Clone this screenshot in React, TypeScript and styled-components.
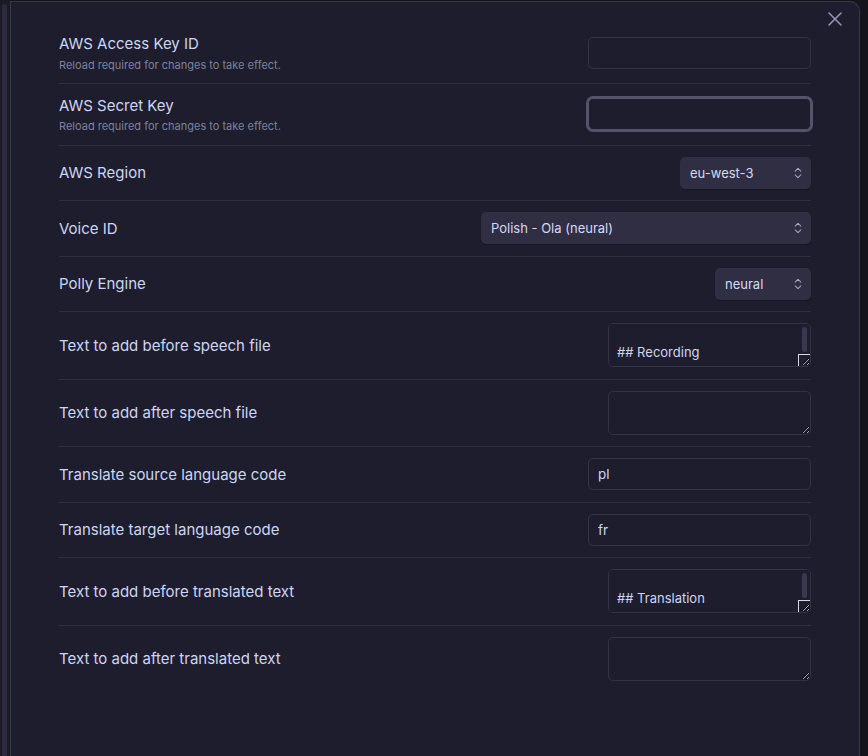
import React, { useEffect, useRef } from "react";
import styled, { createGlobalStyle } from "styled-components";
import { X, ChevronsUpDown } from "lucide-react";

const GlobalStyle = createGlobalStyle`
  html, body { margin: 0; padding: 0; background: #15141d; }
  body { font-family: Inter, "Noto Sans", sans-serif; }
  * { box-sizing: border-box; }
`;

const Page = styled.div`
  display: flex;
  height: 756px;
  padding: 1px 8px 0 0;
  overflow: hidden;
  background: #15141d;
`;

const Gutter = styled.div`
  width: 10px;
  flex: none;
  background: #1b1a26;
  padding: 4px 3px 0 2px;
  margin-top: -1px;
`;

const GutterThumb = styled.div`
  height: 100%;
  border-radius: 3px 3px 0 0;
  background: #2d2b3b;
`;

const Modal = styled.div`
  position: relative;
  flex: 1;
  background: #1e1d2d;
  border: 1px solid #393748;
  border-bottom: none;
  border-top-right-radius: 10px;
  padding: 21px 48px 0 48px;
`;

const CloseButton = styled.button`
  position: absolute;
  top: 5px;
  right: 12px;
  width: 24px;
  height: 24px;
  padding: 0;
  border: none;
  background: transparent;
  color: #8f95b8;
  display: flex;
  align-items: center;
  justify-content: center;
`;

const SettingList = styled.div`
  display: flex;
  flex-direction: column;
`;

const SettingItem = styled.div<{ $first?: boolean }>`
  display: flex;
  align-items: center;
  gap: 16px;
  padding: 11.25px 0;
  border-top: ${(p) => (p.$first ? "none" : "1px solid #302e42")};
`;

const Info = styled.div`
  flex: 1 1 auto;
  min-width: 0;
`;

const Name = styled.div`
  font-size: 15px;
  line-height: 1.3;
  color: #cdd6f4;
`;

const Description = styled.div`
  font-size: 11px;
  line-height: 1.3;
  padding-top: 4px;
  color: #7c819c;
`;

const Control = styled.div`
  flex: none;
  display: flex;
  justify-content: flex-end;
`;

const TextInput = styled.input`
  width: 223px;
  height: 32px;
  padding: 0 9px;
  background: #1e1d2d;
  border: 1px solid #343245;
  border-radius: 5px;
  color: #cdd6f4;
  caret-color: #e6e9fa;
  font-family: Inter, sans-serif;
  font-size: 13.5px;
  outline: none;
  &:focus {
    border-color: #555369;
    box-shadow: 0 0 0 2px #555369;
  }
`;

const SelectWrap = styled.div<{ $w: number }>`
  position: relative;
  width: ${(p) => p.$w}px;
`;

const Select = styled.select`
  appearance: none;
  -webkit-appearance: none;
  width: 100%;
  height: 32px;
  padding: 0 28px 0 10px;
  background: #302e43;
  border: none;
  border-radius: 5px;
  color: #d4daf5;
  font-family: Inter, sans-serif;
  font-size: 13px;
  outline: none;
  box-shadow: 0 1px 1px rgba(0, 0, 0, 0.25);
`;

const SelectIcon = styled.span`
  position: absolute;
  right: 6px;
  top: 9px;
  width: 14px;
  height: 14px;
  color: #a9adc6;
  pointer-events: none;
  display: flex;
`;

const TextAreaWrap = styled.div`
  position: relative;
  width: 203px;
  height: 44px;
`;

const TextArea = styled.textarea`
  color-scheme: dark;
  width: 203px;
  height: 44px;
  padding: 4px 8px;
  background: #1e1d2d;
  border: 1px solid #343245;
  border-radius: 5px;
  color: #cdd6f4;
  font-family: Inter, sans-serif;
  font-size: 13px;
  line-height: 20px;
  resize: both;
  outline: none;
  display: block;
`;

const ScrollThumb = styled.span`
  position: absolute;
  right: 4px;
  top: 4px;
  width: 5px;
  height: 25px;
  border-radius: 3px;
  background: #3a384d;
  pointer-events: none;
`;

const ScrollCorner = styled.span`
  position: absolute;
  right: 1px;
  bottom: 1px;
  width: 12px;
  height: 12px;
  border-top: 1px solid #d8d8e0;
  border-left: 1px solid #d8d8e0;
  pointer-events: none;
`;

type Row =
  | { kind: "input"; name: string; desc?: string; value: string; focus?: boolean }
  | { kind: "select"; name: string; value: string; width: number }
  | { kind: "textarea"; name: string; value: string };

const rows: Row[] = [
  { kind: "input", name: "AWS Access Key ID", desc: "Reload required for changes to take effect.", value: "" },
  { kind: "input", name: "AWS Secret Key", desc: "Reload required for changes to take effect.", value: "", focus: true },
  { kind: "select", name: "AWS Region", value: "eu-west-3", width: 131 },
  { kind: "select", name: "Voice ID", value: "Polish - Ola (neural)", width: 330 },
  { kind: "select", name: "Polly Engine", value: "neural", width: 96 },
  { kind: "textarea", name: "Text to add before speech file", value: "\n## Recording" },
  { kind: "textarea", name: "Text to add after speech file", value: "" },
  { kind: "input", name: "Translate source language code", value: "pl" },
  { kind: "input", name: "Translate target language code", value: "fr" },
  { kind: "textarea", name: "Text to add before translated text", value: "\n## Translation" },
  { kind: "textarea", name: "Text to add after translated text", value: "" },
];

function ScrolledTextArea({ value }: { value: string }) {
  const ref = useRef<HTMLTextAreaElement>(null);
  useEffect(() => {
    if (ref.current) ref.current.scrollTop = ref.current.scrollHeight;
  }, []);
  return (
    <TextAreaWrap>
      <TextArea ref={ref} defaultValue={value} spellCheck={false} />
      {value ? (
        <>
          <ScrollThumb />
          <ScrollCorner />
        </>
      ) : null}
    </TextAreaWrap>
  );
}

function ControlFor({ row }: { row: Row }) {
  if (row.kind === "input") {
    return <TextInput type="text" defaultValue={row.value} autoFocus={row.focus} spellCheck={false} />;
  }
  if (row.kind === "select") {
    return (
      <SelectWrap $w={row.width}>
        <Select defaultValue={row.value}>
          <option value={row.value}>{row.value}</option>
        </Select>
        <SelectIcon>
          <ChevronsUpDown size={14} strokeWidth={1.8} />
        </SelectIcon>
      </SelectWrap>
    );
  }
  return <ScrolledTextArea value={row.value} />;
}

export default function App() {
  return (
    <>
      <GlobalStyle />
      <Page>
        <Gutter>
          <GutterThumb />
        </Gutter>
        <Modal>
          <CloseButton aria-label="Close">
            <X size={24} strokeWidth={1.6} />
          </CloseButton>
          <SettingList>
            {rows.map((row, i) => (
              <SettingItem key={row.name} $first={i === 0}>
                <Info>
                  <Name>{row.name}</Name>
                  {"desc" in row && row.desc ? <Description>{row.desc}</Description> : null}
                </Info>
                <Control>
                  <ControlFor row={row} />
                </Control>
              </SettingItem>
            ))}
          </SettingList>
        </Modal>
      </Page>
    </>
  );
}
